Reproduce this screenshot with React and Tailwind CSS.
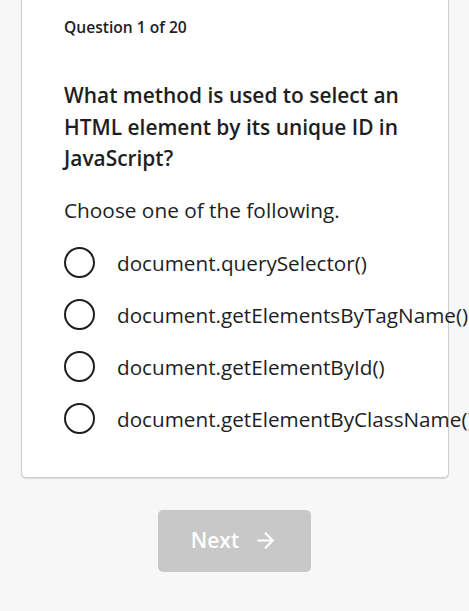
import { ArrowRight } from "lucide-react";

const options = [
  "document.querySelector()",
  "document.getElementsByTagName()",
  "document.getElementById()",
  "document.getElementByClassName()",
];

export default function App() {
  return (
    <div
      className="min-h-[611px] bg-[#f7f7f7] overflow-hidden text-[#1e1e1e]"
      style={{ fontFamily: '"Open Sans", sans-serif' }}
    >
      {/* Question card */}
      <div className="ml-[21px] w-[428px] -mt-[20px] pt-[36px] pb-[38px] pl-[42px] pr-[42px] bg-white border border-[#cfcfcf] rounded-[5px] shadow-[0_1px_1px_rgba(0,0,0,0.12)]">
        <p className="text-[15.6px] leading-[20px] font-semibold">Question 1 of 20</p>
        <h2 className="mt-[43px] text-[20.9px] leading-[31.5px] font-semibold">
          What method is used to select an HTML element by its unique ID in JavaScript?
        </h2>
        <p className="mt-[21px] text-[20.8px] leading-[28px]">Choose one of the following.</p>
        <div className="mt-[19px] flex flex-col gap-[12px]">
          {options.map((opt) => (
            <label key={opt} className="flex items-center h-[40px] gap-[22px] whitespace-nowrap">
              <span className="w-[31px] h-[31px] shrink-0 rounded-full border-[2.5px] border-[#1e1e1e]" />
              <span className="text-[20.7px] leading-[28px]">{opt}</span>
            </label>
          ))}
        </div>
      </div>

      {/* Next button */}
      <div className="flex justify-center mt-[32px]">
        <button className="w-[153px] h-[62px] rounded-[5px] bg-[#c8c8c8] text-white flex items-center justify-center gap-[14px] text-[21px] font-semibold">
          Next
          <ArrowRight className="w-[25px] h-[25px]" strokeWidth={2} />
        </button>
      </div>
    </div>
  );
}
